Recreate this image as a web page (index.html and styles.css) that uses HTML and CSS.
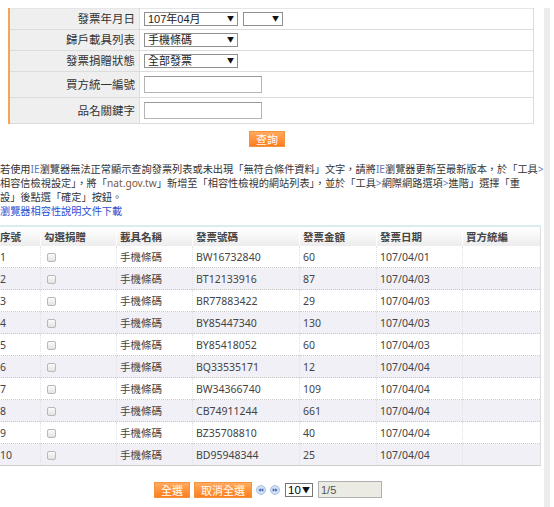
FILE: index.html
```html
<!DOCTYPE html>
<html>
<head>
    <meta charset="utf-8">
    <link rel="stylesheet" href="styles.css">
</head>
<body>
    <div class="page">
        <table class="query">
            <tr>
                <th>發票年月日</th>
                <td>
                    <span class="sel w94"><select><option>107年04月</option></select></span>
                    <span class="sel w40"><select><option></option></select></span>
                </td>
            </tr>
            <tr>
                <th>歸戶載具列表</th>
                <td><span class="sel w94"><select><option>手機條碼</option></select></span></td>
            </tr>
            <tr>
                <th>發票捐贈狀態</th>
                <td><span class="sel w94"><select><option>全部發票</option></select></span></td>
            </tr>
            <tr class="tall">
                <th>買方統一編號</th>
                <td><input type="text" class="box"></td>
            </tr>
            <tr class="tall">
                <th>品名關鍵字</th>
                <td><input type="text" class="box"></td>
            </tr>
        </table>

        <div class="actions">
            <button class="btn">查詢</button>
        </div>

        <p class="note">若使用<span class="hl">IE</span>瀏覽器無法正常顯示查詢發票列表或未出現「無符合條件資料」文字，請將<span class="hl">IE</span>瀏覽器更新至最新版本，於「工具<span class="hl">&gt;</span><br>相容信檢視設定」，將「<span class="site">nat.gov.tw</span>」新增至「相容性檢視的網站列表」，並於「工具<span class="hl">&gt;</span>網際網路選項<span class="hl">&gt;</span>進階」選擇「重<br>設」後點選「確定」按鈕。<br><a href="#" class="doc">瀏覽器相容性說明文件下載</a></p>

        <table class="list">
            <thead>
                <tr>
                    <th class="c1">序號</th>
                    <th class="c2">勾選捐贈</th>
                    <th class="c3">載具名稱</th>
                    <th class="c4">發票號碼</th>
                    <th class="c5">發票金額</th>
                    <th class="c6">發票日期</th>
                    <th class="c7">買方統編</th>
                </tr>
            </thead>
            <tbody id="rows"></tbody>
        </table>

        <div class="pager">
            <button class="btn">全選</button>
            <button class="btn">取消全選</button>
            <svg class="nav" width="10" height="10" viewBox="0 0 10 10">
                <circle cx="5" cy="5" r="4.5" fill="#d3e0f4" stroke="#9db5de" stroke-width="0.8"/>
                <polygon points="2.3,5 4.8,3.2 4.8,6.8" fill="#3d64b8"/>
                <polygon points="4.8,5 7.3,3.2 7.3,6.8" fill="#3d64b8"/>
            </svg>
            <svg class="nav" width="10" height="10" viewBox="0 0 10 10">
                <circle cx="5" cy="5" r="4.5" fill="#d3e0f4" stroke="#9db5de" stroke-width="0.8"/>
                <polygon points="7.7,5 5.2,3.2 5.2,6.8" fill="#3d64b8"/>
                <polygon points="5.2,5 2.7,3.2 2.7,6.8" fill="#3d64b8"/>
            </svg>
            <span class="sel w28"><select><option>10</option></select></span>
            <input type="text" class="pageno" value="1/5" readonly>
        </div>
    </div>

    <script>
        const invoices = [
            ['BW16732840', '60', '107/04/01'],
            ['BT12133916', '87', '107/04/03'],
            ['BR77883422', '29', '107/04/03'],
            ['BY85447340', '130', '107/04/03'],
            ['BY85418052', '60', '107/04/03'],
            ['BQ33535171', '12', '107/04/04'],
            ['BW34366740', '109', '107/04/04'],
            ['CB74911244', '661', '107/04/04'],
            ['BZ35708810', '40', '107/04/04'],
            ['BD95948344', '25', '107/04/04']
        ];

        let html = '';
        invoices.forEach(function (inv, i) {
            html += '<tr>' +
                '<td>' + (i + 1) + '</td>' +
                '<td><input type="checkbox" class="chk"></td>' +
                '<td>手機條碼</td>' +
                '<td>' + inv[0] + '</td>' +
                '<td>' + inv[1] + '</td>' +
                '<td>' + inv[2] + '</td>' +
                '<td></td>' +
                '</tr>';
        });
        document.getElementById('rows').innerHTML = html;
    </script>
</body>
</html>
```

FILE: styles.css
```css
body {
    margin: 0;
    font-family: "Noto Sans", "Noto Sans CJK TC", sans-serif;
    color: #333;
    background: #fff;
    overflow: hidden;
}
.page {
    width: 544px;
    min-height: 507px;
    border-right: 6px solid #ececec;
}

/* query form */
.query {
    border-collapse: collapse;
    margin: 8px 0 0 8px;
    width: 526px;
    border-left: 2px solid #f6a35c;
    font-size: 11.5px;
}
.query th,
.query td {
    border: 1px solid #dcdcdc;
    height: 20px;
    padding: 0;
    line-height: 14px;
}
.query tr:first-child th,
.query tr:first-child td {
    border-top-color: #e6e6e6;
}
.query th {
    width: 125px;
    background: #efefef;
    text-align: right;
    padding-right: 4px;
    font-weight: normal;
    color: #333;
}
.query td {
    padding-left: 4px;
}
.query .tall th,
.query .tall td {
    height: 25px;
}
.sel {
    position: relative;
    display: inline-block;
    vertical-align: middle;
}
.sel select {
    -webkit-appearance: none;
    appearance: none;
    display: block;
    width: 100%;
    height: 14px;
    border: 1px solid #8f8f8f;
    background: #fff;
    font-family: "Liberation Sans", "Noto Sans CJK TC", sans-serif;
    font-size: 11px;
    line-height: 12px;
    padding: 0 3px;
    margin: 0;
    color: #222;
    border-radius: 0;
}
.sel::after {
    content: "▼";
    position: absolute;
    right: 4px;
    top: 2px;
    font-size: 7px;
    line-height: 10px;
    color: #111;
    pointer-events: none;
}
.w94 { width: 94px; }
.w40 { width: 40px; margin-left: 2px; }
.w28 { width: 28px; }
.box {
    width: 118px;
    height: 17px;
    box-sizing: border-box;
    border: 1px solid #b5b5b5;
    border-top-color: #999;
    margin: 0;
    padding: 0 2px;
    vertical-align: middle;
}

/* buttons */
.actions {
    width: 534px;
    display: flex;
    justify-content: center;
    margin-top: 7px;
}
.btn {
    height: 16px;
    padding: 0 6px;
    border: 1px solid #f3933f;
    background: linear-gradient(#ffaa5e, #ff7d1e);
    color: #fff;
    font-family: "Noto Sans CJK TC", sans-serif;
    font-size: 11px;
    line-height: 14px;
    cursor: pointer;
}
.actions .btn {
    width: 36px;
    padding: 0;
}

/* notice */
.note {
    margin: 15px 0 0 0;
    font-size: 10.2px;
    line-height: 14px;
    color: #333;
    white-space: nowrap;
}
.note .hl {
    color: #5a78c4;
}
.note .site {
    color: #7a5a3a;
}
.doc {
    color: #2b4fd3;
    text-decoration: none;
}

/* invoice list */
.list {
    border-collapse: collapse;
    table-layout: fixed;
    width: 544px;
    margin: 7px 0 0 -4px;
    font-size: 10.5px;
    color: #444;
    border-bottom: 1px solid #cfcfcf;
    border-right: 1px solid #dedede;
}
.list th {
    height: 19px;
    padding: 0 0 0 3px;
    text-align: left;
    font-weight: bold;
    color: #444;
    background: linear-gradient(#fff, #ececec);
    border-top: 2px solid #dcebee;
    border-left: 1px solid #fff;
    font-family: "Noto Sans CJK TC", sans-serif;
}
.list td {
    height: 21px;
    padding: 0 0 0 3px;
    border-top: 1px dotted #c8c8c8;
    border-left: 1px dotted #e2e2e2;
}
.list tbody tr:first-child td {
    border-top: none;
}
.list tbody tr:nth-child(even) td {
    background: #f0f0f6;
}
.c1 { width: 40px; }
.c2 { width: 72px; }
.c3 { width: 72px; }
.c4 { width: 103px; }
.c5 { width: 73px; }
.c6 { width: 82px; }
.c7 { width: 74px; }
.chk {
    -webkit-appearance: none;
    appearance: none;
    width: 9px;
    height: 9px;
    margin: 0 0 0 3px;
    border: 1px solid #b8b8b8;
    border-radius: 2px;
    background: linear-gradient(#fafafa, #e4e4e4);
    vertical-align: middle;
}

/* pager */
.pager {
    width: 536px;
    display: flex;
    justify-content: center;
    align-items: center;
    gap: 4px;
    margin-top: 15px;
}
.pager .sel {
    margin-left: 1px;
}
.pager .sel select {
    height: 14px;
    font-size: 11.5px;
    padding: 0 2px;
    border-color: #777;
    color: #000;
}
.pager .sel::after {
    font-size: 8px;
    right: 3px;
}
.pageno {
    width: 64px;
    height: 17px;
    box-sizing: border-box;
    border: 1px solid #b0b0b0;
    background: #ebebe4;
    color: #555;
    font-family: "Liberation Sans", sans-serif;
    font-size: 11px;
    padding: 0 2px;
    margin: 0 0 0 1px;
}
```
